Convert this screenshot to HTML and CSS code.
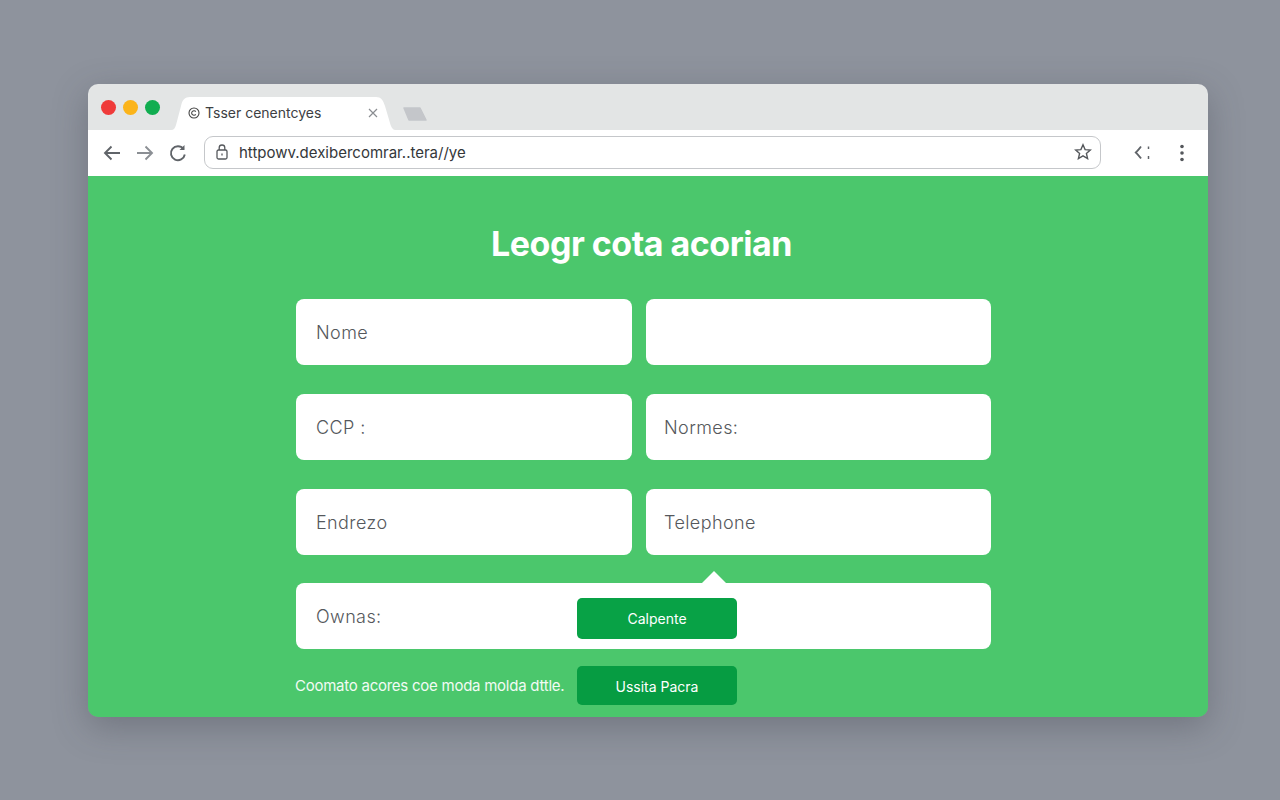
FILE: index.html
```html
<!DOCTYPE html>
<html lang="en">
<head>
  <meta charset="UTF-8">
  <title>Tsser cenentcyes</title>
  <link rel="stylesheet" href="styles.css">
</head>
<body>

  <div class="window">

    <!-- Tab strip -->
    <div class="tabstrip">
      <div class="lights">
        <span class="light red"></span>
        <span class="light yellow"></span>
        <span class="light green"></span>
      </div>
      <div class="tab">
        <svg class="tab-icon" width="12" height="12" viewBox="0 0 12 12" fill="none" stroke="#444" stroke-width="1.1">
          <circle cx="6" cy="6" r="5"/>
          <path d="M7.8 4.6A2.3 2.3 0 1 0 7.8 7.4"/>
        </svg>
        <span class="tab-title">Tsser cenentcyes</span>
        <svg class="tab-close" width="10" height="10" viewBox="0 0 10 10" stroke="#8a8d91" stroke-width="1.2">
          <path d="M1 1L9 9M9 1L1 9"/>
        </svg>
      </div>
      <svg class="new-tab" width="26" height="14" viewBox="0 0 26 14">
        <path d="M2 1H18L24 13H7Z" fill="#c4c6ca" stroke="#c4c6ca" stroke-width="1.5" stroke-linejoin="round"/>
      </svg>
    </div>

    <!-- Toolbar -->
    <div class="toolbar">
      <div class="nav">
        <svg width="20" height="20" viewBox="0 0 20 20" fill="none" stroke="#606469" stroke-width="1.9">
          <path d="M18 10H3M9.5 3.5L3 10L9.5 16.5"/>
        </svg>
        <svg width="20" height="20" viewBox="0 0 20 20" fill="none" stroke="#8b8f94" stroke-width="1.9">
          <path d="M2 10H17M10.5 3.5L17 10L10.5 16.5"/>
        </svg>
        <svg width="20" height="20" viewBox="0 0 20 20" fill="none" stroke="#606469" stroke-width="1.9">
          <path d="M15.5 6A7 7 0 1 0 16.8 11.5"/>
          <path d="M16.5 2V7H11.5" fill="#606469" stroke="none"/>
        </svg>
      </div>
      <div class="omnibox">
        <svg width="14" height="16" viewBox="0 0 14 16" fill="none" stroke="#55585c" stroke-width="1.3">
          <rect x="2" y="6" width="10" height="9" rx="1.5"/>
          <path d="M4.2 6V3.8a2.8 2.8 0 0 1 5.6 0V6"/>
          <path d="M7 9.5V11.5"/>
        </svg>
        <span class="url">httpowv.dexibercomrar..tera//ye</span>
        <svg class="star" width="18" height="18" viewBox="0 0 18 18" fill="none" stroke="#55585c" stroke-width="1.4">
          <path d="M9 1.8L11.1 6.6L16.3 7.1L12.4 10.5L13.6 15.6L9 12.9L4.4 15.6L5.6 10.5L1.7 7.1L6.9 6.6Z"/>
        </svg>
      </div>
      <div class="actions">
        <svg width="18" height="18" viewBox="0 0 18 18" fill="none" stroke="#606469" stroke-width="1.8">
          <path d="M7 2.5C5 5 3.5 7 1.8 8.5C3.5 10 5 12 7 14.5"/>
          <path d="M14.5 2.5V5M14.5 12V15" stroke-width="1.5"/>
        </svg>
        <svg width="6" height="18" viewBox="0 0 6 18" fill="#55585c">
          <circle cx="3" cy="2.5" r="1.8"/>
          <circle cx="3" cy="9" r="1.8"/>
          <circle cx="3" cy="15.5" r="1.8"/>
        </svg>
      </div>
    </div>

    <!-- Form page -->
    <div class="page">
      <h1>Leogr cota acorian</h1>
      <form class="form">
        <div class="field">Nome</div>
        <div class="field"></div>
        <div class="field">CCP :</div>
        <div class="field">Normes:</div>
        <div class="field">Endrezo</div>
        <div class="field">Telephone</div>
        <div class="field wide">
          <span class="wide-label">Ownas:</span>
          <button type="button" class="btn">Calpente</button>
          <span class="notch"></span>
        </div>
        <div class="footer-row">
          <span class="note">Coomato acores coe moda molda dttle.</span>
          <button type="button" class="btn dark">Ussita Pacra</button>
        </div>
      </form>
    </div>

  </div>

</body>
</html>
```

FILE: styles.css
```css
* {
  box-sizing: border-box;
}

body {
  margin: 0;
  height: 800px;
  padding: 84px 72px 83px 88px;
  overflow: hidden;
  background: #8e939d;
  font-family: Inter, "Liberation Sans", sans-serif;
}

.window {
  height: 633px;
  border-radius: 10px;
  overflow: hidden;
  display: flex;
  flex-direction: column;
  box-shadow: 0 10px 34px rgba(60, 64, 75, 0.35);
}

/* tab strip */
.tabstrip {
  height: 46px;
  flex: none;
  display: flex;
  align-items: flex-end;
  padding-left: 13px;
  background: #e3e5e5;
}

.lights {
  display: flex;
  gap: 7px;
  align-self: flex-start;
  margin-top: 16px;
}

.light {
  width: 15px;
  height: 15px;
  border-radius: 50%;
}
.red { background: #ef3b3a; }
.yellow { background: #fbb41a; }
.green { background: #10ad50; }

/* slanted sides like a real browser tab */
.tab {
  width: 224px;
  height: 33px;
  margin-left: 11px;
  padding: 0 17px 2px 17px;
  display: flex;
  align-items: center;
  background: #fff;
  clip-path: path("M0 33C3 33 4 31 5 28L10 9C11 3 14 0 19 0H205C210 0 212 3 214 9L219 26C220 30 222 33 224 33Z");
}

.tab-title {
  margin-left: 5px;
  flex: 1;
  font-size: 14px;
  color: #3d4043;
  white-space: nowrap;
}

.new-tab {
  margin: 0 0 9px 7px;
}

/* toolbar */
.toolbar {
  height: 46px;
  flex: none;
  display: flex;
  align-items: center;
  background: #fff;
  padding-left: 14px;
}

.nav {
  display: flex;
  gap: 13px;
  width: 102px;
}

.omnibox {
  width: 897px;
  height: 33px;
  margin-top: -2px;
  display: flex;
  align-items: center;
  gap: 10px;
  padding: 0 8px 0 10px;
  border: 1px solid #c5c7ca;
  border-radius: 9px;
}

.url {
  flex: 1;
  font-size: 15px;
  color: #34373a;
  white-space: nowrap;
}

.actions {
  display: flex;
  align-items: center;
  gap: 27px;
  margin-left: 33px;
}

/* green page */
.page {
  flex: 1;
  background: #4bc76c;
  padding-top: 48px;
}

h1 {
  margin: 0 0 35px;
  padding-right: 13px;
  text-align: center;
  font-size: 34px;
  line-height: 40px;
  font-weight: 700;
  color: #fff;
  letter-spacing: -0.5px;
}

.form {
  width: 695px;
  margin-left: 208px;
  display: grid;
  grid-template-columns: 336px 345px;
  column-gap: 14px;
  row-gap: 29px;
}

.field {
  height: 66px;
  display: flex;
  align-items: center;
  padding-left: 20px;
  background: #fff;
  border-radius: 8px;
  font-size: 18px;
  font-weight: 300;
  letter-spacing: 0.4px;
  color: #55585c;
}

.field:nth-child(even) {
  padding-left: 18px;
}

.wide {
  grid-column: 1 / 3;
  position: relative;
  margin-top: -1px;
  padding-left: 20px;
}

.wide-label {
  width: 261px;
}

.btn {
  width: 160px;
  height: 41px;
  margin-top: 5px;
  padding-bottom: 2px;
  border: none;
  border-radius: 5px;
  background: #08a246;
  color: #fff;
  font-family: inherit;
  font-size: 14px;
  letter-spacing: 0;
}

.btn.dark {
  height: 39px;
  margin-top: 0;
  padding-bottom: 0;
  background: #069c42;
}

/* little arrow over the wide field */
.notch {
  position: absolute;
  left: 406px;
  top: -12px;
  width: 0;
  height: 0;
  border-left: 12px solid transparent;
  border-right: 12px solid transparent;
  border-bottom: 12px solid #fff;
}

.footer-row {
  grid-column: 1 / 3;
  display: flex;
  align-items: center;
  margin-top: -12px;
}

.note {
  width: 281px;
  margin-left: -1px;
  margin-right: 1px;
  font-size: 15px;
  color: #f2fbf4;
  letter-spacing: -0.25px;
  white-space: nowrap;
}
```
